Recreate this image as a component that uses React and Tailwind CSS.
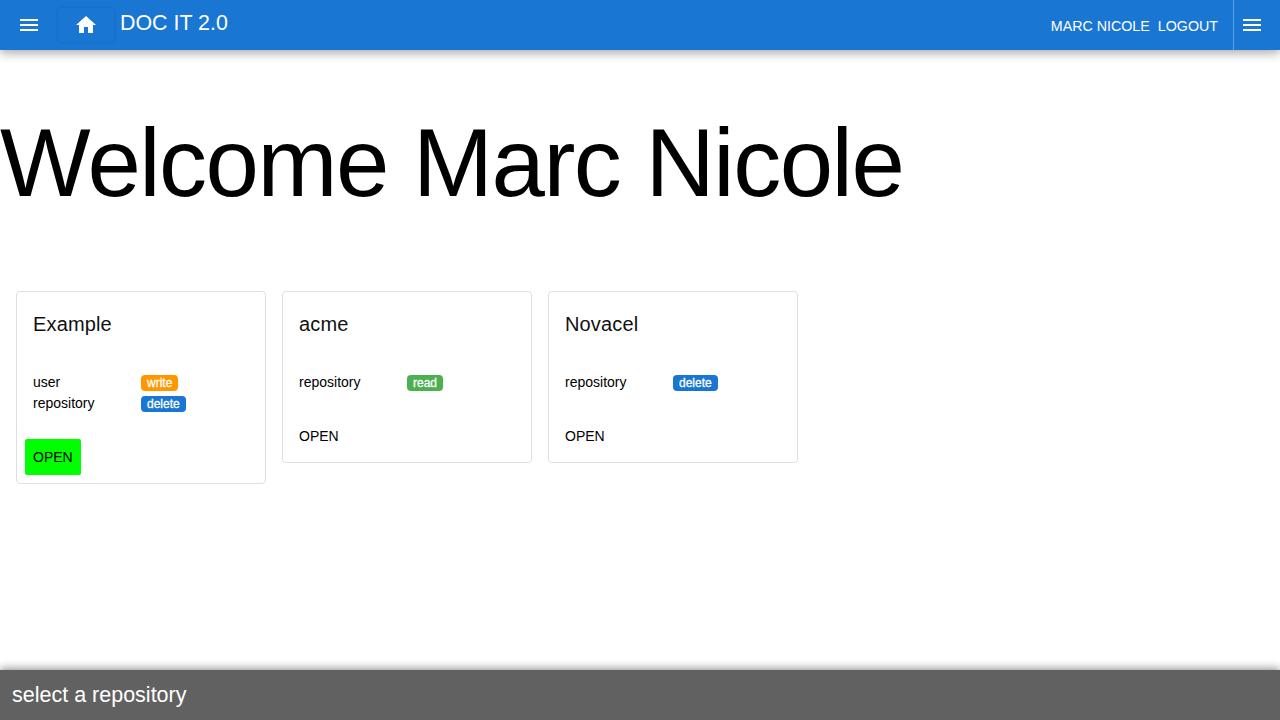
const MENU = "M3 18h18v-2H3v2zm0-5h18v-2H3v2zm0-7v2h18V6H3z";
const HOME = "M10 20v-6h4v6h5v-8h3L12 3 2 12h3v8z";

function Icon({ d }) {
  return (
    <svg viewBox="0 0 24 24" width="24" height="24" fill="currentColor" aria-hidden="true">
      <path d={d} />
    </svg>
  );
}

const BADGE = {
  orange: "bg-[#ff9800]",
  green: "bg-[#4caf50]",
  blue: "bg-[#1976d2]",
};

function Card({ title, rows, active }) {
  return (
    <div className="w-[250px] rounded-[4px] border border-[#e0e0e0] bg-white">
      <div className="px-4 pt-4 pb-[27px] text-[20px] leading-[32px] tracking-[0.15px] text-[#111]">{title}</div>
      <div className="flex flex-col gap-[5px] px-4 pt-[7px]">
        {rows.map(([label, badge, color]) => (
          <div key={label} className="flex h-4 items-center text-[14px] leading-4 text-black">
            <span className="w-[108px]">{label}</span>
            <span className={`${BADGE[color]} h-4 translate-y-[1px] rounded-[4px] px-[6px] text-[12px] leading-4 font-normal text-white [-webkit-text-stroke:0.3px_white]`}>
              {badge}
            </span>
          </div>
        ))}
      </div>
      <div className="flex px-2 pt-[28px] pb-2">
        <button
          className={`flex h-9 items-center rounded-[2px] px-2 text-[14px] text-black ${active ? "bg-[#00ff00]" : ""}`}
        >
          OPEN
        </button>
      </div>
    </div>
  );
}

export default function App() {
  return (
    <div className="flex h-screen flex-col overflow-hidden bg-white font-['Liberation_Sans',Arial,sans-serif]">
      <header className="relative z-10 flex h-[50px] shrink-0 items-start bg-[#1976d2] text-white shadow-[0_3px_10px_rgba(0,0,0,0.35)]">
        <button className="mt-[13px] ml-[17px] flex h-6 w-6 items-center justify-center">
          <Icon d={MENU} />
        </button>
        <button className="mt-2 ml-[17px] flex h-[34px] w-[56px] items-center justify-center rounded-[4px] shadow-[0_0_3px_rgba(0,0,0,0.15)]">
          <Icon d={HOME} />
        </button>
        <div className="mt-[9px] ml-[6px] text-[21.4px] leading-[28px]">DOC IT 2.0</div>
        <div className="mt-[17px] ml-auto flex gap-2 text-[14.25px] leading-[18px]">
          <span>MARC NICOLE</span>
          <span>LOGOUT</span>
        </div>
        <button className="ml-[15px] flex h-[50px] w-[47px] items-center justify-start border-l border-[#5c9fe0] pb-[1px] pl-[6px]">
          <Icon d={MENU} />
        </button>
      </header>

      <main className="min-h-0 flex-1">
        <h1 className="mt-[58px] text-[96px] leading-[110px] font-normal tracking-[-1.5px] text-black">
          Welcome Marc Nicole
        </h1>
        <div className="mt-[73px] flex items-start gap-4 px-4">
          <Card
            title="Example"
            active
            rows={[
              ["user", "write", "orange"],
              ["repository", "delete", "blue"],
            ]}
          />
          <Card title="acme" rows={[["repository", "read", "green"]]} />
          <Card title="Novacel" rows={[["repository", "delete", "blue"]]} />
        </div>
      </main>

      <footer className="relative z-10 flex h-[50px] shrink-0 items-center bg-[#616161] px-3 text-[21.5px] text-white shadow-[0_-2px_8px_rgba(0,0,0,0.4)]">
        select a repository
      </footer>
    </div>
  );
}
